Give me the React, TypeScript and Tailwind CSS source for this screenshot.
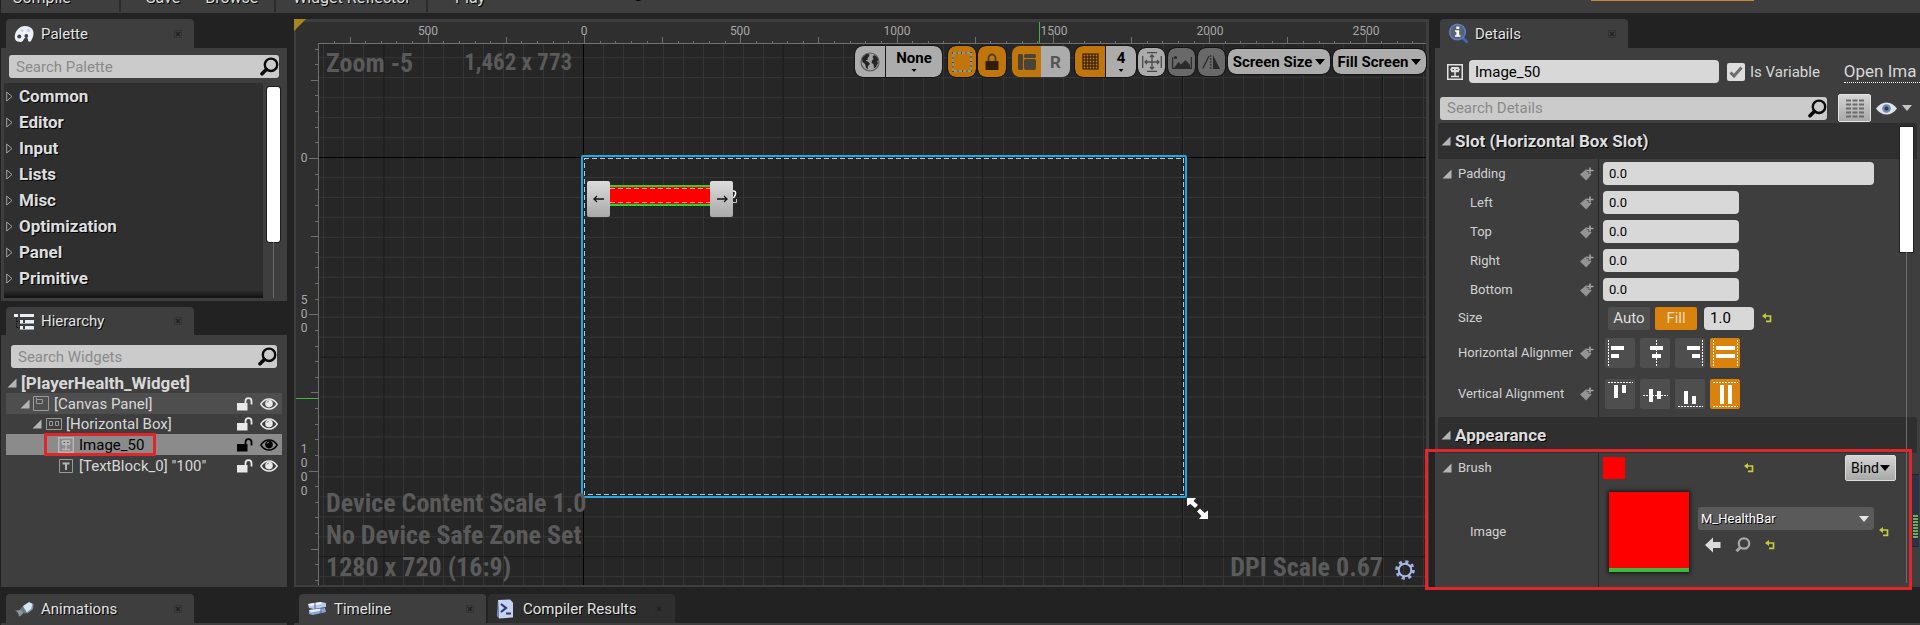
import type { ReactNode } from 'react';

const SHADOW = '[text-shadow:1px_1px_0_#000]';

function CloseMark() {
  return (
    <svg width="8" height="8" viewBox="0 0 8 8" className="shrink-0" aria-hidden="true">
      <path d="M0.5 0.5h7v7h-7z" fill="none" stroke="#2b2b2b" strokeDasharray="1 1" />
      <path d="M2 2l4 4M6 2l-4 4" stroke="#222" strokeWidth="1.6" />
    </svg>
  );
}

function Tab({ icon, label, className, dim }: { icon: ReactNode; label: string; className: string; dim?: boolean }) {
  return (
    <button
      type="button"
      className={`flex shrink-0 items-center rounded-t-sm pl-2 text-left ${dim ? 'bg-[#2e2e2e]' : 'bg-[#3e3e3e]'} ${className}`}
    >
      <span className="flex w-[27px] shrink-0 items-center">{icon}</span>
      <span className={`flex-1 whitespace-nowrap text-[15px] leading-5 text-[#e4e4e4] ${SHADOW}`}>{label}</span>
      <CloseMark />
    </button>
  );
}

function PaletteIcon() {
  return (
    <svg width="20" height="18" viewBox="0 0 20 18" aria-hidden="true">
      <path d="M11 1c5 0 8.500 3 8.500 7 0 3-1 5.500-2.500 8-1 1.500-3 .8-3-1 0-1.700-1-2.600-2.400-2.300-1.600.3-1.600 1.600-2.600 3C7.700 17.500 5.500 17 3.500 16.500 1.500 16 .5 13.500.8 11 1.500 5.500 5.500 1 11 1z" fill="#eef2f8" />
      <circle cx="5.300" cy="11.500" r="2" fill="#3a4456" />
      <circle cx="12.300" cy="11" r="1.900" fill="#3a4456" />
      <circle cx="8" cy="5.500" r="1.500" fill="#c3d2e8" />
      <circle cx="14.500" cy="5.500" r="1.700" fill="#c3d2e8" />
    </svg>
  );
}

function HierarchyIcon() {
  return (
    <svg width="20" height="17" viewBox="0 0 20 17" aria-hidden="true">
      <path d="M0 1h4v3H0zM6 1h14v3H6zM6 7h3v3H6zM11 7h9v3h-9zM6 13h3v3H6zM11 13h9v3h-9z" fill="#e9eff2" />
      <path d="M2.500 5v9.500M2.500 8.500H6M2.500 14.500H6" stroke="#141414" strokeDasharray="1.500 1" />
      <path d="M6 10h14v1H6zM6 16h14v1H6z" fill="#8fa3ac" />
    </svg>
  );
}

function AnimationIcon() {
  return (
    <svg width="20" height="16" viewBox="0 0 20 16" aria-hidden="true">
      <path d="M1 9c2 1 4 .5 6-1l3 3c-2 3-4 4.500-5 4.500L4 12z" fill="#8b949b" />
      <path d="M9 5l6-4 4 2-1 5-5 4-4-3z" fill="#d3e6f2" />
      <path d="M13 12l5-4 1-5" fill="none" stroke="#7f97a6" strokeWidth="1.500" />
      <path d="M6 8.500l3-3.500 4 7-2.500.5z" fill="#6c7a83" />
    </svg>
  );
}

function TimelineIcon() {
  return (
    <svg width="20" height="15" viewBox="0 0 20 15" aria-hidden="true">
      <path d="M1 3l13-2 5 1v4L7 8 2 7z" fill="#b9c8ea" />
      <path d="M1 3l13-2 1 2L3 5z" fill="#f2f6ff" />
      <path d="M2 9l16-2 1 4-13 3-4-1z" fill="#8fa4d6" />
      <path d="M2 9l12-1.500 1 2L4 11.500z" fill="#e6edff" />
      <path d="M8 1v7M14 7v5" stroke="#4b5f93" />
    </svg>
  );
}

function CompilerIcon() {
  return (
    <svg width="18" height="20" viewBox="0 0 18 20" aria-hidden="true">
      <path d="M2 1l12-.5 3 3v15L3 19.500z" fill="#c5d2f3" />
      <path d="M2 1l1 18.500L.8 17z" fill="#7488ba" />
      <path d="M5 5l5 4-5 4" fill="none" stroke="#2a3a68" strokeWidth="2.200" />
      <path d="M10 14.500h5" stroke="#2a3a68" strokeWidth="2" />
    </svg>
  );
}

function DetailsIcon() {
  return (
    <svg width="21" height="21" viewBox="0 0 21 21" aria-hidden="true">
      <path d="M14.500 14.500l5 5" stroke="#4565b8" strokeWidth="3" />
      <circle cx="9.500" cy="9" r="7.800" fill="#5b6270" stroke="#5b7cc9" strokeWidth="1.600" />
      <path d="M8.300 3.500h3v2.400h-3zM7 7.200h4.200v5h1.300v1.600H7v-1.600h1.400V8.800H7z" fill="#fff" />
    </svg>
  );
}

function Magnifier() {
  return (
    <svg width="19" height="19" viewBox="0 0 19 19" className="shrink-0" aria-hidden="true">
      <circle cx="11" cy="7.800" r="6.200" fill="none" stroke="#0a0a0a" strokeWidth="2.400" />
      <path d="M6.300 12.500L2 16.800" stroke="#0a0a0a" strokeWidth="3.600" strokeLinecap="round" />
    </svg>
  );
}

function SearchBox({ label, className }: { label: string; className: string }) {
  return (
    <label className={`flex h-[23px] items-center rounded-[3px] bg-[#cbcbcb] pl-[7px] ${className}`}>
      <input
        type="search"
        aria-label={label}
        placeholder={label}
        className="min-w-0 flex-1 bg-transparent text-[15px] leading-5 text-[#111] outline-none placeholder:text-[#8a8a8a]"
      />
      <Magnifier />
    </label>
  );
}

function OpenArrow() {
  return (
    <svg width="10" height="10" viewBox="0 0 10 10" className="shrink-0" aria-hidden="true">
      <path d="M9.500 0.500v9h-9z" fill="#b4b4b4" />
    </svg>
  );
}

const categories = ['Common', 'Editor', 'Input', 'Lists', 'Misc', 'Optimization', 'Panel', 'Primitive', 'Special Effects'];

function Palette() {
  return (
    <section className="flex h-[253px] shrink-0 flex-col bg-[#3e3e3e] px-[3px] pb-[3px] pt-[7px]">
      <SearchBox label="Search Palette" className="ml-[5px] mr-[5px] shrink-0" />
      <div className="mt-[5px] flex min-h-0 flex-1">
        <div className="relative flex-1 overflow-hidden bg-[#2f2f2f]">
          <ul>
            {categories.map((name) => (
              <li key={name} className="flex h-[26px] items-center gap-[6px] pl-[2px]">
                <svg width="7" height="11" viewBox="0 0 7 11" aria-hidden="true">
                  <path d="M0.700 1v9L6 5.500z" fill="none" stroke="#a2a2a2" />
                </svg>
                <span className={`text-[17px] font-bold leading-5 text-[#dedede] ${SHADOW}`}>{name}</span>
              </li>
            ))}
          </ul>
          <div className="absolute inset-x-0 bottom-0 h-2 bg-linear-to-b from-transparent to-[#111]" />
        </div>
        <div className="flex w-[21px] flex-col items-center pt-1">
          <div className="h-[155px] w-[13px] rounded-[2px] bg-white outline outline-[#1d1d1d]" />
          <div className="w-px flex-1 bg-[#6a6a6a]" />
        </div>
      </div>
    </section>
  );
}

function LockEye({ color }: { color: string }) {
  return (
    <span className="flex items-center gap-[7px] pr-1">
      <svg width="16" height="14" viewBox="0 0 16 14" aria-hidden="true">
        <path d="M0 6h10.500v7.500H0z" fill={color} />
        <path d="M8.500 6V4.200a3 3 0 0 1 6 0V7.500" fill="none" stroke={color} strokeWidth="1.800" />
      </svg>
      <svg width="18" height="12" viewBox="0 0 18 12" aria-hidden="true">
        <path d="M0.800 6C3 2.600 5.800 1 9 1s6 1.600 8.200 5C15 9.400 12.200 11 9 11S3 9.400.8 6z" fill="none" stroke={color} strokeWidth="1.400" />
        <circle cx="9" cy="5.600" r="3.800" fill={color} />
        <path d="M7 4.600a2 2 0 0 1 1.800-1.400" stroke="#8a8a8a" fill="none" />
      </svg>
    </span>
  );
}

function ImageGlyph({ color }: { color: string }) {
  return (
    <svg width="16" height="16" viewBox="0 0 16 16" className="shrink-0" aria-hidden="true">
      <path d="M0.750 0.750h14.500v14.500H0.750z" fill="none" stroke={color} strokeWidth="1.500" />
      <path d="M4.500 3h7l1.300 2.500L11.500 8.300h-7L3.200 5.500z" fill={color} />
      <path d="M8 7v5M4 12.500h8" stroke={color} strokeWidth="1.500" />
      <path d="M5.500 5.500h1.500M9 5.500h1.500" stroke="#555" />
    </svg>
  );
}

function Hierarchy() {
  return (
    <section className="flex min-h-0 flex-1 flex-col bg-[#3e3e3e] pt-[10px]">
      <SearchBox label="Search Widgets" className="ml-[10px] mr-[10px] shrink-0" />
      <ul className="mt-1 flex flex-col pl-[5px] pr-[5px] text-[15px] leading-5 text-[#d8d8d8]">
        <li className="flex h-[21px] items-center gap-1 pl-px">
          <OpenArrow />
          <span className="text-[17px] font-bold">[PlayerHealth_Widget]</span>
        </li>
        <li className="flex h-[21px] items-center bg-[#4e4e4e] pl-[14px]">
          <OpenArrow />
          <svg width="16" height="15" viewBox="0 0 16 15" className="ml-[3px] mr-[5px]" aria-hidden="true">
            <path d="M0.500 0.500h15v14H0.500zM3.500 3.500h6v4h-6zM3.500 3.500V1.500" fill="none" stroke="#999" />
          </svg>
          <span className="flex-1">[Canvas Panel]</span>
          <LockEye color="#e8e8e8" />
        </li>
        <li className="flex h-[20px] items-center pl-[26px]">
          <OpenArrow />
          <svg width="16" height="12" viewBox="0 0 16 12" className="ml-1 mr-1" aria-hidden="true">
            <path d="M0.500 0.500h15v11H0.500zM3.500 3.500h3v4h-3zM9.500 3.500h3v4h-3z" fill="none" stroke="#999" />
          </svg>
          <span className="flex-1">[Horizontal Box]</span>
          <LockEye color="#e8e8e8" />
        </li>
        <li className="flex h-[21px] items-center bg-[#8b8b8b] pl-[38px]">
          <span className="-my-px flex h-[23px] w-[112px] items-center gap-[5px] border-[3px] border-[#e0252b] pl-[11px] text-black">
            <ImageGlyph color="#b5b5b5" />
            Image_50
          </span>
          <span className="flex-1" />
          <LockEye color="#000000" />
        </li>
        <li className="flex h-[21px] items-center pl-[53px]">
          <svg width="14" height="14" viewBox="0 0 14 14" className="mr-[6px]" aria-hidden="true">
            <path d="M0.500 0.500h13v13H0.500z" fill="none" stroke="#9a9a9a" />
            <path d="M3.500 4.500h7M7 4v7" stroke="#b5b5b5" strokeWidth="2" />
          </svg>
          <span className="flex-1">[TextBlock_0] "100"</span>
          <LockEye color="#e8e8e8" />
        </li>
      </ul>
    </section>
  );
}

/* Canvas geometry, measured from the canvas' top left corner. */
const ORIGIN_X = 290;
const ORIGIN_Y = 139;
const UNIT = 15.63;

function Rulers() {
  const xs = Array.from({ length: 72 }, (_, i) => i - 16);
  const ys = Array.from({ length: 35 }, (_, i) => i - 7);
  return (
    <svg className="absolute inset-0 h-full w-full" aria-hidden="true">
      <defs>
        <pattern id="minor" x="289" y="138" width="20" height="19.960" patternUnits="userSpaceOnUse">
          <path d="M0.500 0v20M0 0.500h20" stroke="#353535" fill="none" />
        </pattern>
        <pattern id="major" x="289" y="138" width="199.700" height="199.600" patternUnits="userSpaceOnUse">
          <path d="M0.500 0v200M0 0.500h200" stroke="#141414" fill="none" />
        </pattern>
      </defs>
      <rect width="100%" height="100%" fill="#262626" />
      <rect width="100%" height="100%" fill="url(#minor)" />
      <rect width="100%" height="100%" fill="url(#major)" />
      <path d="M0 138.500H1135M289.500 0V568" stroke="#000" />
      <rect width="100%" height="24" fill="#2f2f2f" />
      <rect width="24" height="100%" fill="#2f2f2f" />
      <path d="M24 24.500H1135M24.500 24V568" stroke="#707070" />
      {xs.map((i) => {
        const x = Math.round(ORIGIN_X + i * UNIT) + 0.5;
        const top = i % 10 === 0 ? 15 : i % 5 === 0 ? 18 : 22;
        return x > 25 ? <path key={i} d={`M${x} ${top}V24`} stroke="#707070" /> : null;
      })}
      {ys.map((i) => {
        const y = Math.round(ORIGIN_Y + i * UNIT) + 0.5;
        const left = i % 10 === 0 ? 15 : i % 5 === 0 ? 17 : 21;
        return y > 25 ? <path key={i} d={`M${left} ${y}H24`} stroke="#707070" /> : null;
      })}
      <g fill="#a8a8a8" fontSize="12" textAnchor="middle">
        <text x="134" y="16">500</text>
        <text x="290" y="16">0</text>
        <text x="446" y="16">500</text>
        <text x="603" y="16">1000</text>
        <text x="760" y="16">1500</text>
        <text x="916" y="16">2000</text>
        <text x="1072" y="16">2500</text>
        <text x="10" y="143">0</text>
        <text x="10" y="285">5</text>
        <text x="10" y="299">0</text>
        <text x="10" y="313">0</text>
        <text x="10" y="434">1</text>
        <text x="10" y="448">0</text>
        <text x="10" y="462">0</text>
        <text x="10" y="476">0</text>
      </g>
      <path d="M745.500 3V24M2 379.500H24" stroke="#3fb53f" />
    </svg>
  );
}

function Caret() {
  return (
    <svg width="10" height="6" viewBox="0 0 10 6" className="shrink-0" aria-hidden="true">
      <path d="M0 0h10L5 6z" fill="#000" />
    </svg>
  );
}

function SmallCaret() {
  return (
    <svg width="6" height="4" viewBox="0 0 6 4" aria-hidden="true">
      <path d="M0.500 0h5L3 3z" fill="#000" />
    </svg>
  );
}

const toolButton = 'flex shrink-0 items-center justify-center outline outline-[#151515]';

function DesignerToolbar() {
  return (
    <div className="absolute right-[3px] top-[27px] flex h-[31px] items-center text-[15px] font-bold leading-4 text-black">
      <button type="button" aria-label="Localization preview" className={`${toolButton} h-[31px] w-[30px] rounded-l-lg bg-[#acacac]`}>
        <svg width="20" height="20" viewBox="0 0 20 20" aria-hidden="true">
          <circle cx="10" cy="10" r="9" fill="#a2a2a2" stroke="#5a5a5a" strokeWidth="1.200" />
          <path d="M3 5l3.500-3 3 .2-.5 2.300L7.500 6 8 7.500 5.500 8.500l3 1.500 1.500 2-2 2-.5 3.500L6 15.500 5 12 2.500 10 2 7z" fill="#242424" />
          <path d="M12.500 5l1.500-2L17 5l1.500 3.500-1.500.5 1 2-2.500 4.500-1.500.5-.5-4-2-1L12 8.500l1.500-1.500z" fill="#242424" />
        </svg>
      </button>
      <button type="button" className={`${toolButton} ml-px h-[31px] w-[56px] flex-col gap-[3px] rounded-r-lg bg-[#acacac]`}>
        None
        <SmallCaret />
      </button>
      <button type="button" aria-label="Show outlines" className={`${toolButton} ml-[6px] h-[31px] w-7 rounded-lg bg-[#c0760b]`}>
        <svg width="20" height="20" viewBox="0 0 20 20" aria-hidden="true">
          <path d="M1 1h18v18H1z" fill="none" stroke="#5e4a22" strokeWidth="2" />
          <path d="M1 1h18v18H1z" fill="none" stroke="#b3ab98" strokeWidth="1.400" strokeDasharray="3.500 1" />
        </svg>
      </button>
      <button type="button" aria-label="Respect locks" className={`${toolButton} ml-[2px] h-[31px] w-7 rounded-lg bg-[#c0760b]`}>
        <svg width="14" height="18" viewBox="0 0 14 18" aria-hidden="true">
          <path d="M0.500 8h13v9h-13z" fill="#2e1e06" />
          <path d="M3.500 8V5a3.500 3.500 0 0 1 7 0v3" fill="none" stroke="#4f3a19" strokeWidth="1.800" />
        </svg>
      </button>
      <span className="ml-[6px] flex">
        <button type="button" aria-label="Layout transform" className="flex h-[31px] w-[29px] shrink-0 items-center justify-center rounded-l-lg bg-[#c0760b]">
          <svg width="18" height="16" viewBox="0 0 18 16" aria-hidden="true">
            <rect x="0" y="0" width="5" height="16" rx="1.500" fill="#4a4338" />
            <rect x="6" y="0" width="12" height="4" rx="1.500" fill="#4a4338" />
            <rect x="6" y="5" width="12" height="11" rx="2" fill="#4a4338" />
          </svg>
        </button>
        <button type="button" className="flex h-[31px] w-[29px] shrink-0 items-center justify-center rounded-r-lg bg-[#acacac] text-[17px] text-[#555]">
          R
        </button>
      </span>
      <button type="button" aria-label="Grid snapping" className={`${toolButton} ml-[5px] h-[31px] w-[30px] rounded-l-lg bg-[#c0760b]`}>
        <svg width="17" height="17" viewBox="0 0 17 17" aria-hidden="true">
          <path d="M1 1h15v15H1zM4 1v15M7 1v15M10 1v15M13 1v15M1 4h15M1 7h15M1 10h15M1 13h15" fill="none" stroke="#22170a" strokeWidth="1.100" />
        </svg>
      </button>
      <button type="button" className={`${toolButton} ml-px h-[31px] w-[30px] flex-col gap-[3px] rounded-r-lg bg-[#acacac]`}>
        4
        <SmallCaret />
      </button>
      <button type="button" aria-label="Zoom to fit" className={`${toolButton} ml-[2px] h-7 w-[27px] rounded-lg bg-[#acacac]`}>
        <svg width="20" height="20" viewBox="0 0 20 20" fill="none" stroke="#4a4a4a" strokeWidth="1.300" aria-hidden="true">
          <path d="M5 .7h10M5 19.300h10M.7 4v12M19.300 4v12M10 3v14M3 10h14M8 5l2-2 2 2M8 15l2 2 2-2M5 8l-2 2 2 2M15 8l2 2-2 2" />
        </svg>
      </button>
      <button type="button" aria-label="Background image" className={`${toolButton} ml-[3px] h-7 w-[27px] rounded-lg bg-[#696969] outline-[#444]`}>
        <svg width="20" height="14" viewBox="0 0 20 14" aria-hidden="true">
          <path d="M.6 2v11.400h18.800V2" fill="none" stroke="#2a2a2a" strokeWidth="1.200" />
          <circle cx="3.500" cy="2.500" r="1.600" fill="#2a2a2a" />
          <path d="M2 13l4.500-6L9 9.500 13.500 5 18 10v3z" fill="#2a2a2a" />
        </svg>
      </button>
      <button type="button" aria-label="Flow direction" className={`${toolButton} ml-[3px] h-7 w-[27px] rounded-lg bg-[#696969] outline-[#444]`}>
        <svg width="19" height="14" viewBox="0 0 19 14" aria-hidden="true">
          <path d="M.8 13.500L7 1" stroke="#2a2a2a" strokeWidth="1.300" />
          <path d="M8.800 0v14" stroke="#2a2a2a" strokeDasharray="2 1" />
          <path d="M11 0v14h7z" fill="#2a2a2a" />
        </svg>
      </button>
      <button type="button" className={`${toolButton} ml-[3px] h-[25px] w-[102px] gap-[3px] whitespace-nowrap rounded-lg bg-[#acacac]`}>
        Screen Size
        <Caret />
      </button>
      <button type="button" className={`${toolButton} ml-[3px] h-[25px] w-[93px] gap-[3px] whitespace-nowrap rounded-lg bg-[#acacac]`}>
        Fill Screen
        <Caret />
      </button>
    </div>
  );
}

const condensed = 'font-["Roboto_Condensed","Liberation_Sans_Narrow",Roboto,sans-serif] font-bold text-[#5a5a5a]';

function Designer() {
  return (
    <main className="relative min-w-0 flex-1 overflow-hidden">
      <Rulers />
      <div className="pointer-events-none absolute inset-0 border-b-2 border-l-2 border-r-[3px] border-t-[3px] border-[#3e3e3e]" />
      <svg width="13" height="13" className="absolute left-0 top-0" aria-hidden="true">
        <path d="M0 0h12L0 12z" fill="#a8851f" />
      </svg>

      <div className="absolute left-[287px] top-[136px] h-[343px] w-[606px] rounded-[2px] border-2 border-[#2aa6dc]">
        <div className="h-full border border-[#0e2f42]">
          <svg className="block h-full w-full" aria-hidden="true">
            <rect width="100%" height="100%" fill="none" stroke="#c4c4c4" strokeWidth="2" strokeDasharray="5 3" />
          </svg>
        </div>
      </div>
      <div className="absolute left-[316px] top-[166px] h-[21px] w-[100px] border-y-2 border-[#2fd030] bg-[#ff0000]">
        <svg className="block h-full w-full" aria-hidden="true">
          <path d="M0 1.500H100M0 15.500H100" stroke="#e8b0a0" strokeDasharray="5 3" />
        </svg>
      </div>
      <svg width="6" height="14" viewBox="0 0 6 14" className="absolute left-[438px] top-[171px]" aria-hidden="true">
        <path d="M0 1c3-.5 4 1 3.500 3S2 7 1.500 8" fill="none" stroke="#fff" strokeWidth="1.500" />
        <path d="M4.500 9v3.500H0" fill="none" stroke="#c4c4c4" />
      </svg>
      <button type="button" aria-label="Move left" className="absolute left-[293px] top-[162px] flex h-9 w-[23px] items-center justify-center rounded-[2px] bg-linear-to-b from-[#dcdcdc] to-[#a9a9a9]">
        <svg width="12" height="8" viewBox="0 0 12 8" aria-hidden="true">
          <path d="M1 4h10M4 1L1 4l3 3" fill="none" stroke="#111" strokeWidth="1.300" />
        </svg>
      </button>
      <button type="button" aria-label="Move right" className="absolute left-[416px] top-[162px] flex h-9 w-[23px] items-center justify-center rounded-[2px] bg-linear-to-b from-[#dcdcdc] to-[#a9a9a9]">
        <svg width="12" height="8" viewBox="0 0 12 8" aria-hidden="true">
          <path d="M1 4h10M8 1l3 3-3 3" fill="none" stroke="#111" strokeWidth="1.300" />
        </svg>
      </button>
      <svg width="24" height="24" viewBox="0 0 24 24" className="absolute left-[892px] top-[478px]" aria-hidden="true">
        <path d="M1 1h9L7.500 4l4.500 4-3 3-4.500-4L1 9zM22 22h-9l2.500-3L11 14.500l3-3 4.500 4.500L22 13.500z" fill="#fff" />
      </svg>

      <div className={`absolute left-8 top-7 flex items-center gap-[51px] text-[26px] leading-8 ${condensed}`}>
        <span>Zoom -5</span>
        <span className="text-[23px]">1,462 x 773</span>
      </div>
      <div className={`absolute bottom-1 left-8 text-[26px] leading-8 ${condensed}`}>
        <p>Device Content Scale 1.0</p>
        <p>No Device Safe Zone Set</p>
        <p>1280 x 720 (16:9)</p>
      </div>
      <div className={`absolute bottom-1 right-[14px] flex items-center gap-3 text-[26px] leading-8 ${condensed}`}>
        DPI Scale 0.67
        <svg width="20" height="20" viewBox="0 0 20 20" className="mt-[6px]" aria-hidden="true">
          <circle cx="10" cy="10" r="8.300" fill="none" stroke="#9fb0e0" strokeWidth="3" strokeDasharray="3.200 3.320" />
          <circle cx="10" cy="10" r="6.300" fill="none" stroke="#a9b8e6" strokeWidth="2" />
        </svg>
      </div>
      <DesignerToolbar />
    </main>
  );
}

function KeyIcon() {
  return (
    <svg width="14" height="14" viewBox="0 0 14 14" className="shrink-0" aria-hidden="true">
      <path d="M0 7.500L6.500 2l5 5.500-5.300 6z" fill="#949494" />
      <path d="M10 0v7M6.800 3.500h7" stroke="#3e3e3e" strokeWidth="3" />
      <path d="M10 .5v6M7 3.500h6.500" stroke="#a4a4a4" strokeWidth="1.600" />
    </svg>
  );
}

function ResetButton() {
  return (
    <button type="button" aria-label="Reset to default" className="flex shrink-0">
      <svg width="10" height="10" viewBox="0 0 10 10" aria-hidden="true">
        <path d="M1.500 3h7v5.300H4" fill="none" stroke="#c3cc3a" strokeWidth="1.700" />
        <path d="M4 0v6L0 3z" fill="#c3cc3a" />
      </svg>
    </button>
  );
}

function Row({ label, id, height, open, indent, bind = true, children }: {
  label: string;
  id?: string;
  height: string;
  open?: boolean;
  indent?: boolean;
  bind?: boolean;
  children: ReactNode;
}) {
  return (
    <div className={`flex shrink-0 ${height}`}>
      <div className="flex w-[164px] shrink-0 items-center border-r border-[#262626] pl-[7px] pr-1">
        <span className="w-4 shrink-0">{open ? <OpenArrow /> : null}</span>
        <label htmlFor={id} className={`min-w-0 flex-1 overflow-hidden whitespace-nowrap text-[13px] leading-5 text-[#d2d2d2] ${indent ? 'pl-3' : ''}`}>
          {label}
        </label>
        {bind ? <span className="pl-[7px]"><KeyIcon /></span> : null}
      </div>
      <div className="flex flex-1 items-center pl-1">{children}</div>
    </div>
  );
}

const field = 'h-[23px] shrink-0 rounded-[4px] bg-[#d8d8d8] px-[6px] leading-5 text-black outline-none';

function SectionTitle({ children }: { children: ReactNode }) {
  return (
    <h2 className={`ml-[3px] mr-[3px] flex h-9 shrink-0 items-center gap-1 rounded-t-[3px] bg-[#2f2f2f] pl-[3px] text-[17px] font-bold leading-5 text-[#dedede] ${SHADOW}`}>
      <OpenArrow />
      {children}
    </h2>
  );
}

function AlignButton({ label, on, path, guide }: { label: string; on?: boolean; path: string; guide: string }) {
  return (
    <button type="button" aria-label={label} className={`h-[30px] w-[30px] rounded-[2px] ${on ? 'bg-[#d9820c]' : 'bg-[#4e4e4e]'}`}>
      <svg width="30" height="30" viewBox="0 0 30 30" aria-hidden="true">
        <path d={guide} stroke="#fff" strokeDasharray="2 1" />
        <path d={path} fill="#fff" />
      </svg>
    </button>
  );
}

function Details() {
  return (
    <section className="relative flex min-h-0 flex-1 flex-col bg-[#3e3e3e]">
      <div className="flex h-9 shrink-0 items-center overflow-hidden whitespace-nowrap pl-3 pt-[11px]">
        <ImageGlyph color="#e2e2e2" />
        <input aria-label="Widget name" defaultValue="Image_50" className={`${field} ml-[6px] w-[250px] text-[15px]`} />
        <label className="ml-2 flex h-[23px] shrink-0 items-center gap-[5px] text-[15px] leading-5 text-[#d8d8d8]">
          <span className="grid h-[18px] w-[18px] place-items-center">
            <input type="checkbox" defaultChecked className="col-start-1 row-start-1 h-[18px] w-[18px] appearance-none rounded-[2px] bg-[#dedede]" />
            <svg width="14" height="12" viewBox="0 0 14 12" className="pointer-events-none col-start-1 row-start-1" aria-hidden="true">
              <path d="M1.500 6.500l3.500 3.500 7.500-8.500" fill="none" stroke="#6d6d6d" strokeWidth="3" />
            </svg>
          </span>
          Is Variable
        </label>
        <a href="#open" className="ml-6 flex-1 border-b border-dotted border-white text-[17px] leading-[22px] text-[#d8d8d8]">Open Ima</a>
      </div>
      <div className="flex h-[39px] shrink-0 items-center pl-[5px] pt-[9px]">
        <SearchBox label="Search Details" className="w-[387px] shrink-0" />
        <button type="button" aria-label="Property matrix" className="ml-[11px] flex h-7 w-[33px] items-center justify-center rounded-[2px] border border-[#e2e2e2] bg-linear-to-b from-[#d4d4d4] to-[#a8a8a8]">
          <svg width="18" height="19" viewBox="0 0 18 19" aria-hidden="true">
            <path d="M0 1.500h18M0 5.500h18M0 9.500h18M0 13.500h18M0 17.500h18" stroke="#6b6b6b" strokeWidth="2" strokeDasharray="5 1.500" />
          </svg>
        </button>
        <button type="button" aria-label="View options" className="ml-[5px] flex items-center gap-[5px]">
          <svg width="21" height="13" viewBox="0 0 21 13" aria-hidden="true">
            <path d="M0 6.500C3 2.500 6.500.5 10.500.5S18 2.500 21 6.500c-3 4-6.500 6-10.500 6S3 10.500 0 6.500z" fill="#dfe3ec" />
            <circle cx="10.500" cy="6.500" r="4.300" fill="#7386ad" />
            <circle cx="10.500" cy="6.500" r="2" fill="#2b3a5e" />
          </svg>
          <svg width="10" height="6" viewBox="0 0 10 6" aria-hidden="true">
            <path d="M0 0h10L5 6z" fill="#c4c4c4" />
          </svg>
        </button>
      </div>
      <div className="flex min-h-0 flex-1 flex-col overflow-hidden">
        <SectionTitle>Slot (Horizontal Box Slot)</SectionTitle>
        <Row label="Padding" id="padding" height="h-[29px]" open>
          <input id="padding" defaultValue="0.0" className={`${field} w-[271px] text-[13px]`} />
        </Row>
        {['Left', 'Top', 'Right', 'Bottom'].map((side) => (
          <Row key={side} label={side} id={side} height="h-[29px]" indent>
            <input id={side} defaultValue="0.0" className={`${field} w-[136px] text-[13px]`} />
          </Row>
        ))}
        <Row label="Size" id="size" height="h-7" bind={false}>
          <button type="button" className="ml-[5px] h-[23px] w-[42px] rounded-[2px] bg-[#4e4e4e] text-[15px] leading-5 text-[#dedede]">Auto</button>
          <button type="button" className="ml-[5px] h-[23px] w-[42px] rounded-[2px] bg-[#d9820c] text-[15px] leading-5 text-[#f0dcc0]">Fill</button>
          <input id="size" defaultValue="1.0" className={`${field} ml-[7px] mr-2 w-[50px] text-[15px]`} />
          <ResetButton />
        </Row>
        <Row label="Horizontal Alignment" height="h-[42px]">
          <div className="ml-[2px] flex gap-[5px]">
            <AlignButton label="Left" guide="M3.500 2v26" path="M6 8h13v4H6zM6 16h8v4H6z" />
            <AlignButton label="Center" guide="M16.500 2v26" path="M10 8h13v4H10zM12 16h9v4h-9z" />
            <AlignButton label="Right" guide="M27.500 2v26" path="M12 8h13v4H12zM17 16h8v4h-8z" />
            <AlignButton label="Fill" on guide="M3.500 2v26M27.500 2v26" path="M6 8h19v4H6zM6 16h19v4H6z" />
          </div>
        </Row>
        <Row label="Vertical Alignment" height="h-10">
          <div className="ml-[2px] flex gap-[5px]">
            <AlignButton label="Top" guide="M3 3.500h25" path="M9 6h4v13H9zM17 6h4v8h-4z" />
            <AlignButton label="Middle" guide="M3 16.500h25" path="M9 10h4v13H9zM17 12h4v8h-4z" />
            <AlignButton label="Bottom" guide="M3 27.500h25" path="M9 12h4v13H9zM17 17h4v8h-4z" />
            <AlignButton label="Stretch" on guide="M3 3.500h25M3 27.500h25" path="M10 6h4v19h-4zM18 6h4v19h-4z" />
          </div>
        </Row>
        <div className="ml-[163px] h-[3px] shrink-0 border-l border-[#262626]" />
        <SectionTitle>Appearance</SectionTitle>
        <Row label="Brush" height="h-[30px]" open bind={false}>
          <span className="h-[22px] w-[22px] bg-[#ff0000]" />
          <span className="ml-[119px] flex"><ResetButton /></span>
          <button type="button" className="ml-[91px] flex h-[26px] w-[51px] items-center justify-center gap-px rounded-[2px] border border-[#dcdcdc] bg-linear-to-b from-[#d4d4d4] to-[#a9a9a9] text-[14px] leading-5 text-black">
            Bind
            <Caret />
          </button>
        </Row>
        <Row label="Image" id="brush-image" height="h-[98px]" indent bind={false}>
          <span className="ml-[6px] h-20 w-20 border-b-4 border-[#3fb83f] bg-[#ff0000] shadow-[0_0_4px_1px_#111]" />
          <div className="ml-[9px] flex flex-col gap-[7px] pb-1">
            <div className="grid h-[23px] w-[176px] items-center">
              <select id="brush-image" className={`col-start-1 row-start-1 h-[23px] w-full appearance-none rounded-[3px] bg-[#5a5a5a] pl-[3px] text-[13px] leading-5 text-white outline-none ${SHADOW}`}>
                <option>M_HealthBar</option>
              </select>
              <svg width="10" height="6" viewBox="0 0 10 6" className="pointer-events-none col-start-1 row-start-1 mr-[5px] justify-self-end" aria-hidden="true">
                <path d="M0 0h10L5 6z" fill="#e4e4e4" />
              </svg>
            </div>
            <div className="flex items-center gap-[14px] pl-[7px]">
              <button type="button" aria-label="Use selected asset">
                <svg width="16" height="16" viewBox="0 0 16 16" aria-hidden="true">
                  <path d="M0 8l8-7.500V5h7.500v6H8v4.500z" fill="#dcdcdc" />
                </svg>
              </button>
              <button type="button" aria-label="Browse to asset">
                <svg width="16" height="16" viewBox="0 0 16 16" aria-hidden="true">
                  <circle cx="9" cy="6.500" r="5.200" fill="none" stroke="#a8a8a8" strokeWidth="2.200" />
                  <path d="M5.300 10.500L1.500 14.300" stroke="#a8a8a8" strokeWidth="3" />
                </svg>
              </button>
              <ResetButton />
            </div>
          </div>
          <span className="ml-[5px] flex"><ResetButton /></span>
        </Row>
        <div className="ml-[163px] flex-1 border-l border-[#262626]" />
      </div>
      <div className="absolute bottom-1 right-[7px] top-[79px] flex w-[13px] flex-col items-center">
        <div className="h-[125px] w-[13px] bg-white outline outline-[#222]" />
        <div className="w-px flex-1 bg-[#6a6a6a]" />
      </div>
      <div className="absolute bottom-[40px] right-px h-[73px] w-2 border-y border-[#1b2230] bg-[#2c3444]">
        <div className="ml-[2px] mt-[40px] h-6 w-[5px] bg-[repeating-linear-gradient(to_bottom,#6fae5a_0_2px,#23303a_2px_3px)]" />
      </div>
      <div className="pointer-events-none absolute -bottom-[3px] -left-[10px] right-2 h-[141px] border-[3px] border-[#e0252b]" />
    </section>
  );
}

const toolbarText = `text-[16px] leading-5 text-[#dcdcdc] ${SHADOW}`;

export default function App() {
  return (
    <div className="flex h-screen flex-col overflow-hidden bg-[#222] font-[Roboto,sans-serif]">
      <header className="relative ml-px flex h-[13px] shrink-0 items-end overflow-hidden bg-[#3e3e3e]">
        <span className={`w-[118px] pl-[11px] ${toolbarText}`}><span className="block pb-[5px]">Compile</span></span>
        <span className="h-3 w-[2px] self-start bg-[#2c2c2c]" />
        <span className={`w-[153px] pl-[25px] ${toolbarText}`}>
          <span className="flex gap-[25px] pb-[5px]"><span>Save</span><span>Browse</span></span>
        </span>
        <span className="h-3 w-[2px] self-start bg-[#2c2c2c]" />
        <span className={`w-[150px] pl-[17px] ${toolbarText}`}><span className="block pb-[5px]">Widget Reflector</span></span>
        <span className="h-3 w-[2px] self-start bg-[#2c2c2c]" />
        <span className={`pl-[27px] ${toolbarText}`}><span className="block pb-[5px]">Play</span></span>
        <span className={`pl-[111px] ${toolbarText}`}><span className="block pb-[11px]">Debug Filter</span></span>
        <span className="absolute right-[166px] top-0 h-px w-[163px] bg-[#c98a33]" />
      </header>
      <div className="mt-[6px] flex min-h-0 flex-1 gap-[7px]">
        <aside className="flex w-[287px] shrink-0 flex-col pl-px">
          <Tab icon={<PaletteIcon />} label="Palette" className="ml-[5px] h-[29px] w-[188px] pr-3" />
          <Palette />
          <Tab icon={<HierarchyIcon />} label="Hierarchy" className="ml-[5px] mt-[6px] h-7 w-[188px] pr-3" />
          <Hierarchy />
          <Tab icon={<AnimationIcon />} label="Animations" className="ml-[5px] mt-[7px] h-[29px] w-[188px] pr-3" />
          <div className="h-[2px] shrink-0 bg-[#3e3e3e]" />
        </aside>
        <div className="flex min-w-0 flex-1 flex-col">
          <div className="flex min-h-0 flex-1 gap-[6px]">
            <Designer />
            <div className="flex w-[485px] shrink-0 flex-col">
              <Tab icon={<DetailsIcon />} label="Details" className="ml-[5px] h-[29px] w-[188px] pr-3" />
              <Details />
            </div>
          </div>
          <div className="mt-[7px] flex shrink-0 gap-[2px] pl-[5px]">
            <Tab icon={<TimelineIcon />} label="Timeline" className="h-[29px] w-[187px] pr-3" />
            <Tab icon={<CompilerIcon />} label="Compiler Results" className="h-[29px] w-[187px] pr-3" dim />
          </div>
          <div className="h-[2px] shrink-0 bg-[#3e3e3e]" />
        </div>
      </div>
    </div>
  );
}
